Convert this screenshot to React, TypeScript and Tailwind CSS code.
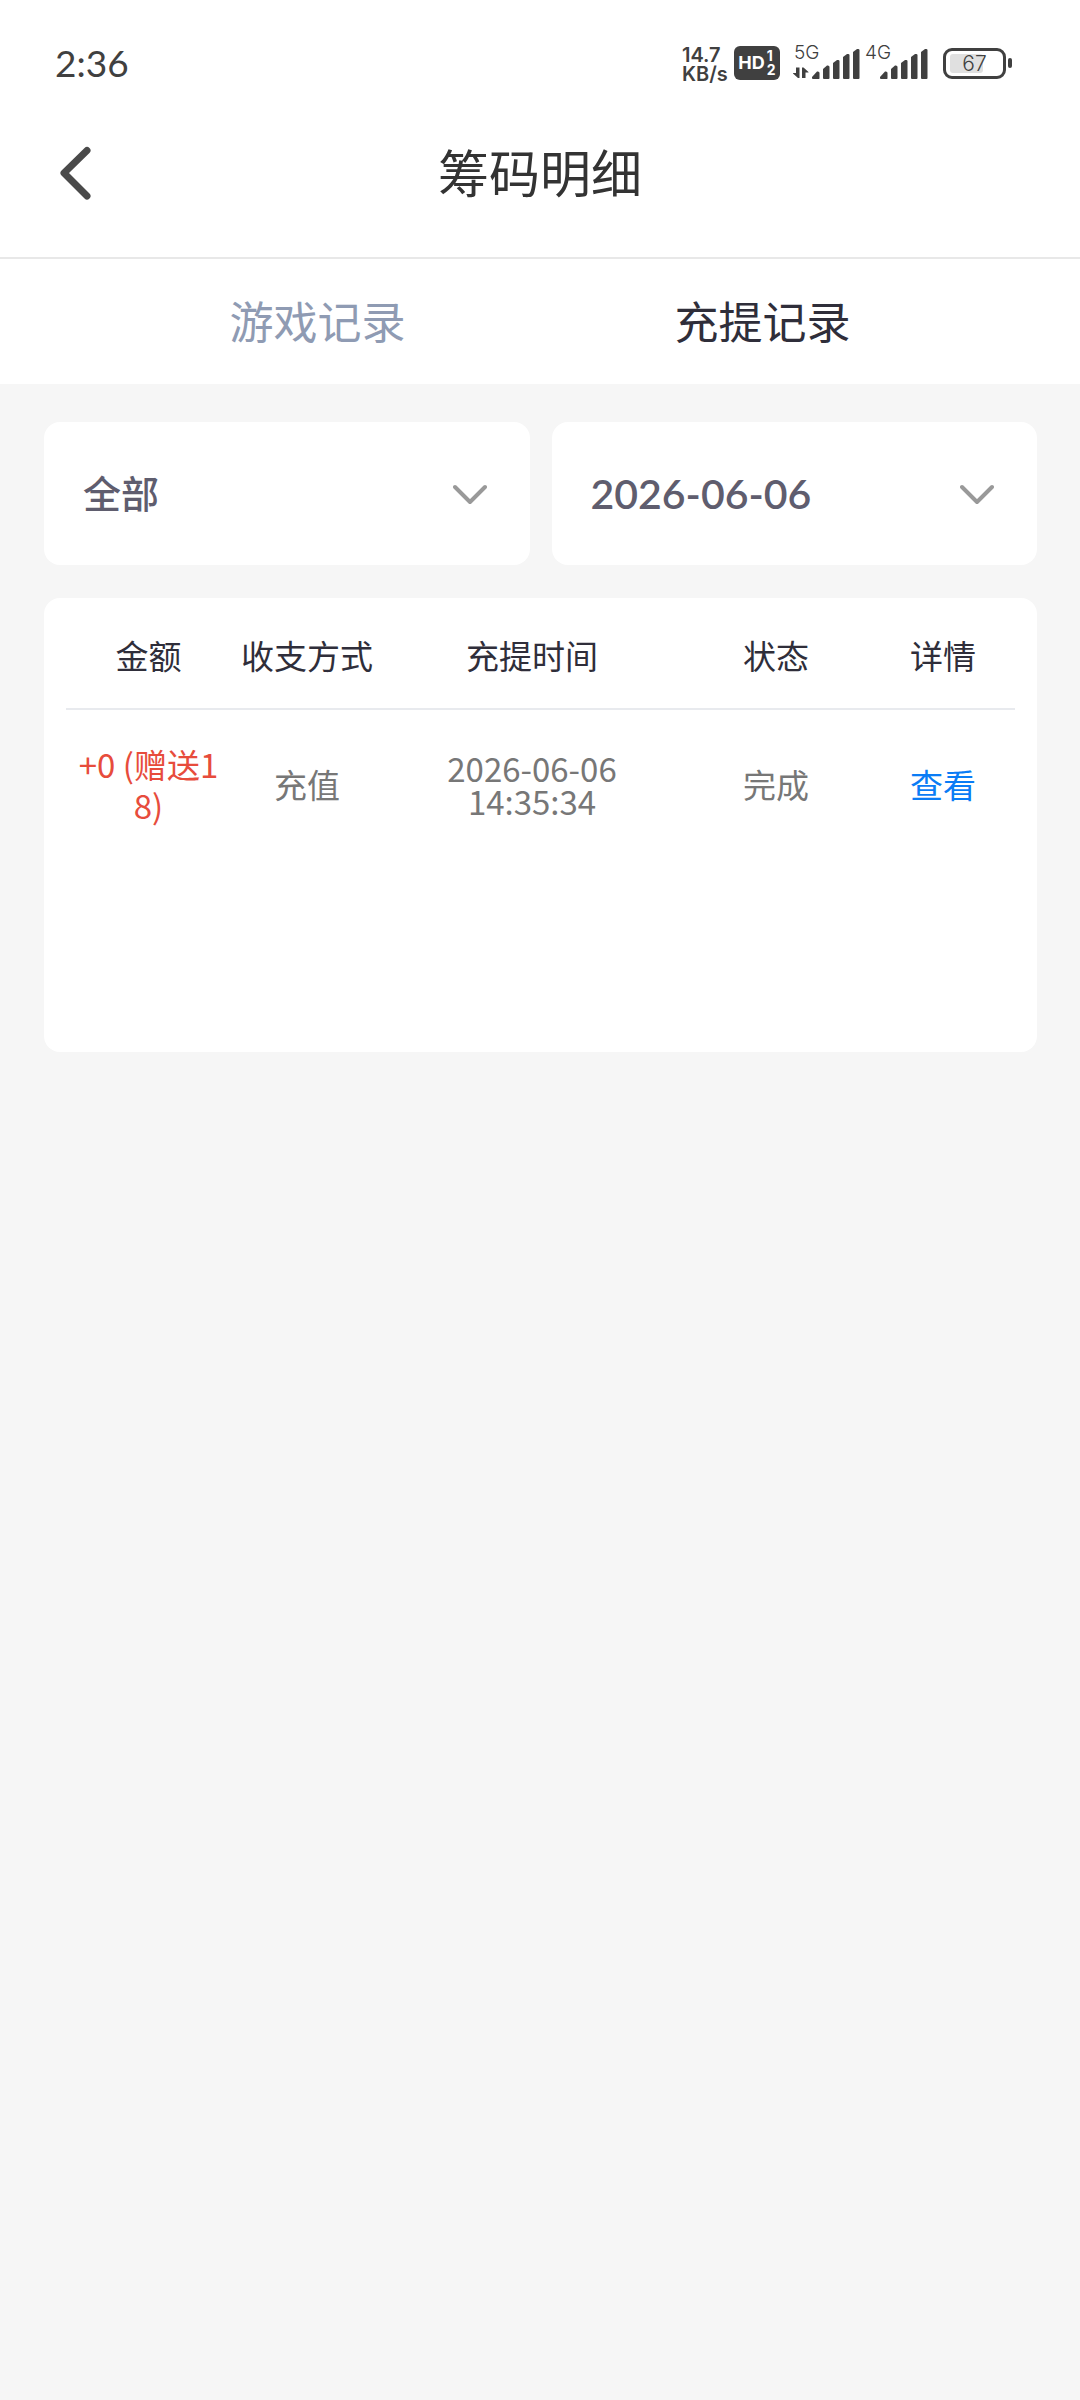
import React, { useState } from 'react';

interface Transaction {
  id: string;
  amount: string;
  method: string;
  date: string;
  time: string;
  status: string;
}

type Tab = 'games' | 'funds';

const TABS: { key: Tab; label: string }[] = [
  { key: 'games', label: '游戏记录' },
  { key: 'funds', label: '充提记录' },
];

const TRANSACTIONS: Transaction[] = [
  { id: 't1', amount: '+0 (赠送18)', method: '充值', date: '2026-06-06', time: '14:35:34', status: '完成' },
];

const SignalBars: React.FC<{ label: string; arrows?: boolean }> = ({ label, arrows }) => (
  <div className={`relative h-8 ${arrows ? 'w-[69px]' : 'w-[64px]'}`}>
    <span className={`absolute -top-0.5 font-['Inter'] text-[19px] font-light leading-[16px] ${arrows ? 'left-0.5' : 'left-0'}`}>{label}</span>
    <svg className="absolute right-0 top-0" width="69" height="32" viewBox="-2 0 69 32" fill="currentColor">
      {arrows && (
        <>
          <path d="M-1 26 H2 V20.500 H5.500 V31 H4 L-1 26.500Z" />
          <path d="M8 20.500 H9.500 L14.500 25 V25.500 H11.500 V31 H8Z" />
        </>
      )}
      <path d="M18 30 L23 24.500 Q25.500 24 25.500 26 V31 Q25.500 32 25 32 H19 Q18 32 18 31Z" />
      <path d="M29 22 L33 18.500 Q35.500 18 35.500 20 V31 Q35.500 32 34.500 32 H30 Q29 32 29 31Z" />
      <path d="M39 16 L43 13 Q45.500 12.500 45.500 14 V31 Q45.500 32 44.500 32 H40 Q39 32 39 31Z" />
      <path d="M49 10 L53 7 Q55.500 6.500 55.500 8 V31 Q55.500 32 54.500 32 H50 Q49 32 49 31Z" />
      <path d="M59 5 L63 2 Q65.500 1.500 65.500 3 V31 Q65.500 32 64.500 32 H60 Q59 32 59 31Z" />
    </svg>
  </div>
);

const StatusBar: React.FC = () => (
  <div className="flex items-center justify-between pt-[45px] pb-2 pl-[55px] pr-[68px] text-[#404040]">
    <span className="font-['Lato'] text-[37px] leading-9">2:36</span>
    <div className="flex h-9 items-center">
      <div className="mr-2 w-11 pt-1 font-['Inter'] text-[20px] font-semibold leading-[19px]">
        <div>14.7</div>
        <div>KB/s</div>
      </div>
      <div className="mr-3 flex h-[34px] w-[46px] items-center justify-center rounded-md bg-[#404040] font-['Inter'] font-bold text-white">
        <span className="text-[18px] leading-none">HD</span>
        <span className="ml-0.5 flex flex-col text-[14px] leading-[14px]">
          <span>1</span>
          <span>2</span>
        </span>
      </div>
      <SignalBars label="5G" arrows />
      <div className="w-1" />
      <SignalBars label="4G" />
      <div className="ml-3.5 flex items-center gap-0.5">
        <div className="relative flex h-[31px] w-[63px] items-center justify-center rounded-[9px] border-3 border-[#404040]">
          <div className="absolute inset-y-[3px] left-1 w-[33px] rounded-[3px] bg-[#e0e0e0]" />
          <span className="relative font-['Inter'] text-[21px] font-light leading-none">67</span>
        </div>
        <div className="h-[10px] w-1 rounded-[2px] bg-[#404040]" />
      </div>
    </div>
  </div>
);

const FilterSelect: React.FC<{
  label: string;
  value: string;
  options: string[];
  className: string;
  onChange: (value: string) => void;
}> = ({ label, value, options, className, onChange }) => (
  <div className="relative flex-1">
    <select
      aria-label={label}
      value={value}
      onChange={e => onChange(e.target.value)}
      className={`h-[143px] w-full appearance-none rounded-2xl bg-white pl-[39px] pr-24 text-[#5f5d6e] outline-none ${className}`}
    >
      {options.map(o => <option key={o}>{o}</option>)}
    </select>
    <svg className="pointer-events-none absolute right-[43px] top-[62px]" width="34" height="22" viewBox="0 0 34 22" fill="none" stroke="#999" strokeWidth="4" strokeLinecap="round" strokeLinejoin="round">
      <path d="M2 3 L17 18 L32 3" />
    </svg>
  </div>
);

const App: React.FC = () => {
  const [tab, setTab] = useState<Tab>('funds');
  const [type, setType] = useState('全部');
  const [date, setDate] = useState('2026-06-06');

  return (
    <div className="min-h-screen bg-[#f6f6f6] font-['Noto_Sans_CJK_SC',sans-serif]">
      <header className="border-b-2 border-[#e8e8e8] bg-white">
        <StatusBar />
        <div className="relative flex h-[168px] items-center justify-center">
          <button type="button" aria-label="返回" className="absolute left-14 flex h-16 w-10 items-center">
            <svg width="38" height="54" viewBox="0 0 38 54" fill="none" stroke="#4a4a4a" strokeWidth="7" strokeLinecap="round" strokeLinejoin="round">
              <path d="M31 4.500 L8 27 L31 50" />
            </svg>
          </button>
          <h1 className="pb-1 text-[51px] leading-none text-[#333]">筹码明细</h1>
        </div>
      </header>

      <nav className="flex h-[125px] bg-white px-[95px]">
        {TABS.map(t => (
          <button
            key={t.key}
            type="button"
            onClick={() => setTab(t.key)}
            className={`flex-1 pb-1 text-[44px] leading-none ${tab === t.key ? 'text-[#2f2e3a]' : 'text-[#8f9bb3]'}`}
          >
            {t.label}
          </button>
        ))}
      </nav>

      <main className="pl-11 pr-[43px] pt-[38px]">
        <div className="flex gap-[22px]">
          <FilterSelect label="类型" value={type} options={['全部', '充值', '提现']} className="pb-1 text-[38px] font-medium" onChange={setType} />
          <FilterSelect label="日期" value={date} options={['2026-06-06', '2026-06-05', '2026-06-04']} className="font-['Lato'] text-[41px] font-semibold" onChange={setDate} />
        </div>

        <section className="mt-[33px] min-h-[454px] rounded-2xl bg-white px-[22px]">
          <table className="w-full table-fixed border-collapse text-center text-[33px] leading-[33px]">
            <thead>
              <tr className="h-[111px] border-b-2 border-[#e8eaee] text-[#2f2e3a]">
                <th className="w-[165px] pt-1 font-normal">金额</th>
                <th className="w-[152px] pt-1 font-normal">收支方式</th>
                <th className="w-[298px] pt-1 font-normal">充提时间</th>
                <th className="w-[190px] pt-1 font-normal">状态</th>
                <th className="w-[144px] pt-1 font-normal">详情</th>
              </tr>
            </thead>
            <tbody>
              {TRANSACTIONS.map(t => (
                <tr key={t.id} className="h-[150px] text-[#777]">
                  <td className="px-3 leading-[41px] break-all text-[#e74c3c]">{t.amount}</td>
                  <td>{t.method}</td>
                  <td>{t.date}<br />{t.time}</td>
                  <td>{t.status}</td>
                  <td><a href="#detail" className="text-[#0a7cf5]">查看</a></td>
                </tr>
              ))}
            </tbody>
          </table>
        </section>
      </main>
    </div>
  );
};

export default App;
